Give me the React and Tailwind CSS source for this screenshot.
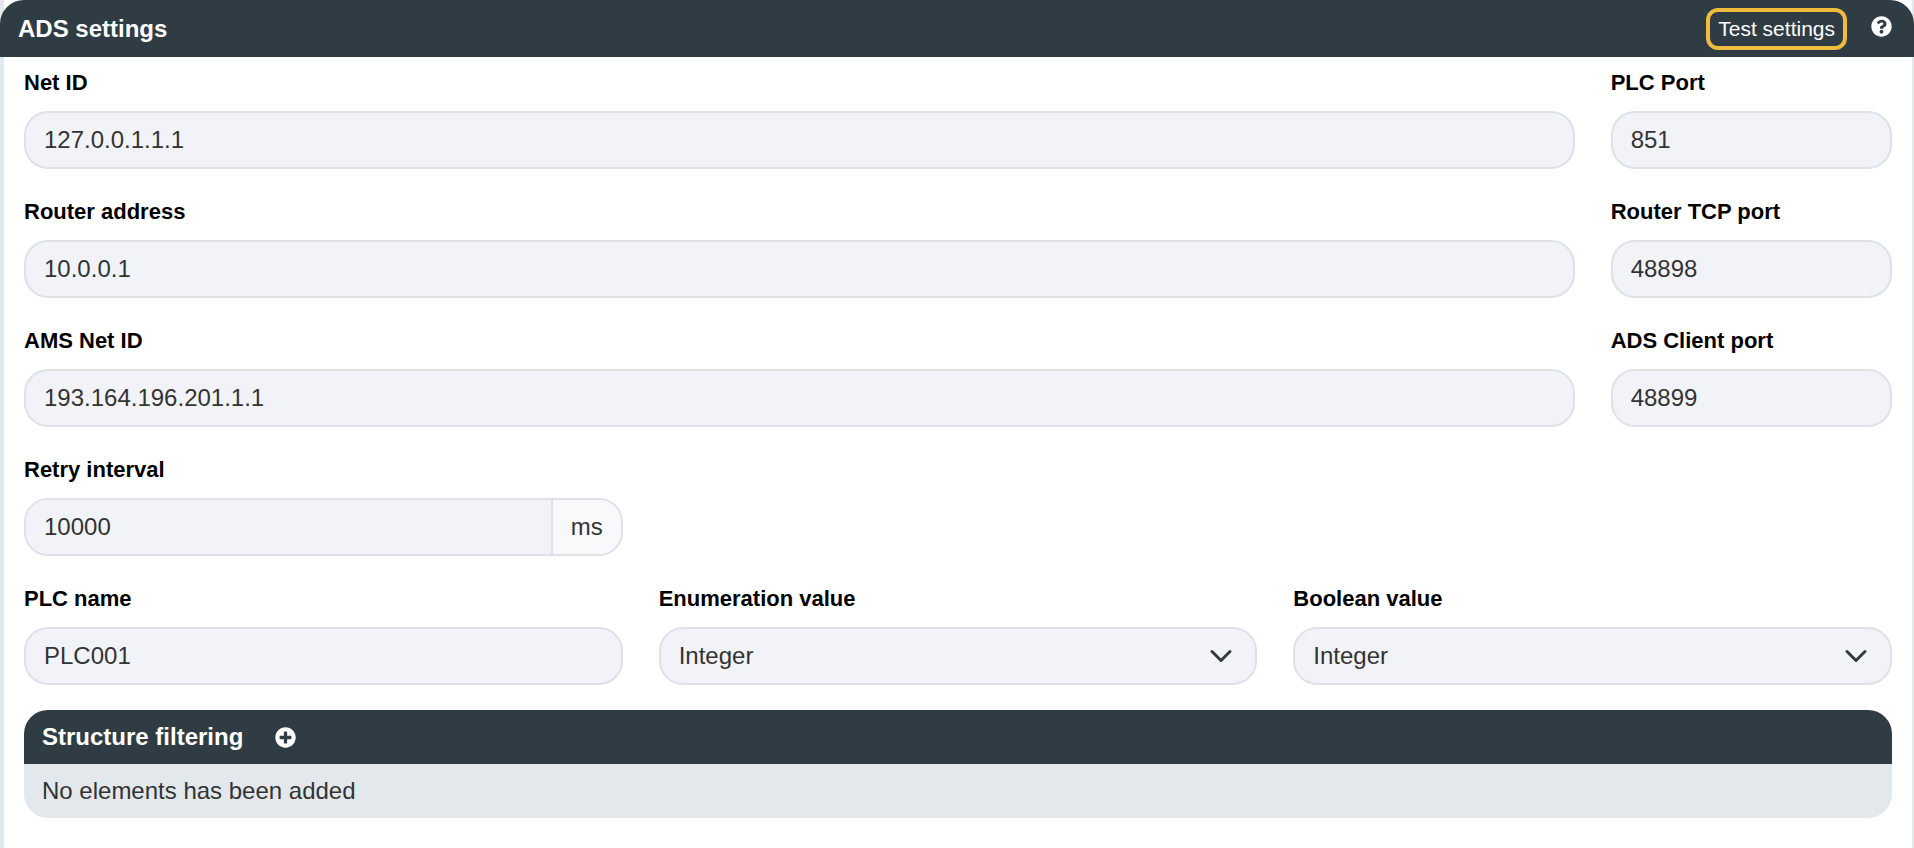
import React, { useState } from "react";
import { FaQuestionCircle, FaPlusCircle } from "react-icons/fa";

const VALUE_TYPES = ["Integer", "Text"];

const Label = ({ htmlFor, children }) => (
  <label
    htmlFor={htmlFor}
    className="block mb-3 text-[22px] leading-8 font-bold text-black"
  >
    {children}
  </label>
);

const TextField = ({ id, label, value, onChange, className }) => (
  <div className={className}>
    <Label htmlFor={id}>{label}</Label>
    <input
      id={id}
      type="text"
      value={value}
      onChange={(e) => onChange(id, e.target.value)}
      className="block w-full h-[58px] px-[18px] text-2xl text-[#333333] bg-[#f2f3f8] border-2 border-[#dee2e6] rounded-3xl outline-none"
    />
  </div>
);

const SelectField = ({ id, label, value, onChange, className }) => (
  <div className={className}>
    <Label htmlFor={id}>{label}</Label>
    <div className="relative">
      <select
        id={id}
        value={value}
        onChange={(e) => onChange(id, e.target.value)}
        className="block w-full h-[58px] pl-[18px] pr-14 text-2xl text-[#333333] bg-[#f2f3f8] border-2 border-[#dee2e6] rounded-3xl appearance-none outline-none"
      >
        {VALUE_TYPES.map((type) => (
          <option key={type}>{type}</option>
        ))}
      </select>
      <svg
        viewBox="0 0 16 16"
        className="absolute right-6 inset-y-0 my-auto size-6 pointer-events-none"
        fill="none"
        stroke="#343a40"
        strokeWidth="2"
        strokeLinecap="round"
        strokeLinejoin="round"
      >
        <path d="m2 5 6 6 6-6" />
      </svg>
    </div>
  </div>
);

const App = () => {
  const [settings, setSettings] = useState({
    netId: "127.0.0.1.1.1",
    plcPort: "851",
    routerAddress: "10.0.0.1",
    routerTcpPort: "48898",
    amsNetId: "193.164.196.201.1.1",
    adsClientPort: "48899",
    retryInterval: "10000",
    plcName: "PLC001",
    enumerationValue: "Integer",
    booleanValue: "Integer",
  });

  const update = (key, value) =>
    setSettings((prev) => ({ ...prev, [key]: value }));

  const field = (id, label, className) => ({
    id,
    label,
    className,
    value: settings[id],
    onChange: update,
  });

  return (
    <main className="min-h-screen bg-white border-l-4 border-r-2 border-[#e2e8ec] font-['Liberation_Sans',Arial,sans-serif]">
      {/* Title bar */}
      <header className="flex items-center justify-between h-[57px] -ml-1 -mr-0.5 pl-[18px] pr-[22px] bg-[#303c44] text-white rounded-t-3xl">
        <h1 className="text-2xl font-bold">ADS settings</h1>
        <div className="flex items-center gap-6">
          <button
            type="button"
            className="h-[42px] px-2 text-[21px] leading-8 border-4 border-[#f0bc3e] rounded-xl cursor-pointer"
          >
            Test settings
          </button>
          <button type="button" aria-label="Help" className="pb-1 cursor-pointer">
            <FaQuestionCircle className="size-[21px]" />
          </button>
        </div>
      </header>

      <form
        onSubmit={(e) => e.preventDefault()}
        className="grid grid-cols-12 gap-x-9 gap-y-[27px] px-5 pt-[10px]"
      >
        <TextField {...field("netId", "Net ID", "col-span-10")} />
        <TextField {...field("plcPort", "PLC Port", "col-span-2")} />

        <TextField {...field("routerAddress", "Router address", "col-span-10")} />
        <TextField {...field("routerTcpPort", "Router TCP port", "col-span-2")} />

        <TextField {...field("amsNetId", "AMS Net ID", "col-span-10")} />
        <TextField {...field("adsClientPort", "ADS Client port", "col-span-2")} />

        {/* Retry interval with unit */}
        <div className="col-span-4">
          <Label htmlFor="retryInterval">Retry interval</Label>
          <div className="flex h-[58px] text-2xl text-[#333333] border-2 border-[#dee2e6] rounded-3xl overflow-hidden">
            <input
              id="retryInterval"
              type="text"
              value={settings.retryInterval}
              onChange={(e) => update("retryInterval", e.target.value)}
              className="flex-1 min-w-0 px-[18px] bg-[#f2f3f8] outline-none"
            />
            <span className="flex items-center px-[18px] bg-[#f8f9fb] border-l-2 border-[#dee2e6]">
              ms
            </span>
          </div>
        </div>

        <TextField {...field("plcName", "PLC name", "col-span-4 col-start-1")} />
        <SelectField
          {...field("enumerationValue", "Enumeration value", "col-span-4")}
        />
        <SelectField {...field("booleanValue", "Boolean value", "col-span-4")} />
      </form>

      {/* Structure filtering */}
      <section className="mx-5 mt-[25px] rounded-3xl overflow-hidden">
        <div className="flex items-center gap-8 h-[54px] px-[18px] bg-[#303c44] text-white">
          <h2 className="text-2xl font-bold">Structure filtering</h2>
          <button
            type="button"
            aria-label="Add structure filter"
            className="cursor-pointer"
          >
            <FaPlusCircle className="size-[21px]" />
          </button>
        </div>
        <p className="flex items-center h-[54px] px-[18px] text-2xl text-[#333333] bg-[#e2e8ec]">
          No elements has been added
        </p>
      </section>
    </main>
  );
};

export default App;
